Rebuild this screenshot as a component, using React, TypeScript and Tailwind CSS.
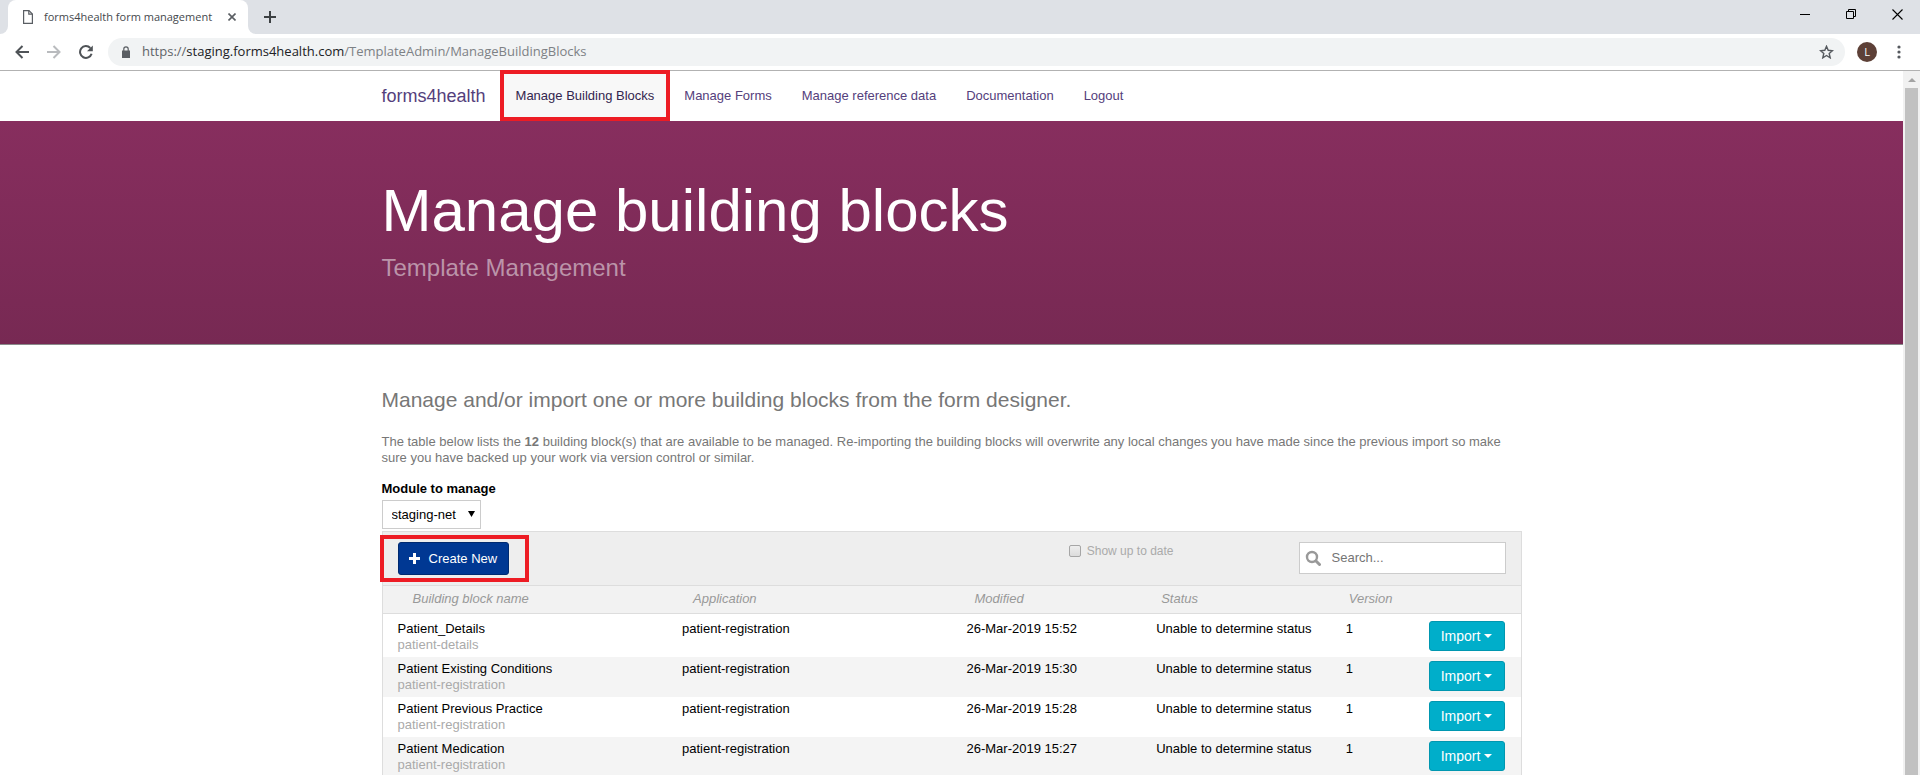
import React from "react";

const navItems = ["Manage Building Blocks", "Manage Forms", "Manage reference data", "Documentation", "Logout"];

const rows = [
  { name: "Patient_Details", slug: "patient-details", app: "patient-registration", modified: "26-Mar-2019 15:52" },
  { name: "Patient Existing Conditions", slug: "patient-registration", app: "patient-registration", modified: "26-Mar-2019 15:30" },
  { name: "Patient Previous Practice", slug: "patient-registration", app: "patient-registration", modified: "26-Mar-2019 15:28" },
  { name: "Patient Medication", slug: "patient-registration", app: "patient-registration", modified: "26-Mar-2019 15:27" },
];

function Highlight({ className }: { className: string }) {
  return <span aria-hidden="true" className={`pointer-events-none absolute z-10 border-4 border-[#ed1c24] ${className}`} />;
}

function TabStrip() {
  return (
    <div className="flex h-[34px] shrink-0 items-stretch justify-between bg-[#dee1e6]">
      <div className="flex items-stretch">
        <div className="w-2 bg-white">
          <div className="h-full rounded-br-lg bg-[#dee1e6]" />
        </div>
        <div className="flex w-60 items-center rounded-t-lg bg-white pl-[15px] pr-[11px]">
          <svg width="10" height="14" viewBox="0 0 10 14" fill="none" stroke="#5a5e63" strokeWidth="1.2">
            <path d="M.6.6h5.4L9.4 4v9.4H.6z" />
            <path d="M5.8.8v3.4h3.4" />
          </svg>
          <span className="ml-[11px] flex-1 whitespace-nowrap text-[11px] text-[#45494d]">forms4health form management</span>
          <button aria-label="Close tab" className="p-px">
            <svg width="8" height="8" viewBox="0 0 8 8" stroke="#5a5e63" strokeWidth="1.6">
              <path d="M.5.5l7 7M7.5.5l-7 7" />
            </svg>
          </button>
        </div>
        <div className="w-2 bg-white">
          <div className="h-full rounded-bl-lg bg-[#dee1e6]" />
        </div>
        <button aria-label="New tab" className="flex items-center px-2">
          <svg width="12" height="12" viewBox="0 0 12 12" stroke="#3c4043" strokeWidth="2">
            <path d="M6 0v12M0 6h12" />
          </svg>
        </button>
      </div>
      <div className="flex items-start gap-9 pr-[17px] pt-[9px]">
        <button aria-label="Minimise">
          <svg width="10" height="11" viewBox="0 0 10 11" stroke="#000" strokeWidth="1">
            <path d="M0 5.5h10" />
          </svg>
        </button>
        <button aria-label="Restore">
          <svg width="10" height="10" viewBox="0 0 10 10" fill="none" stroke="#000" strokeWidth="1">
            <path d="M.5 2.500h7v7h-7z" />
            <path d="M2.500 2.500v-2h7v7h-2" />
          </svg>
        </button>
        <button aria-label="Close">
          <svg width="11" height="11" viewBox="0 0 11 11" stroke="#000" strokeWidth="1.1">
            <path d="M.5.5l10 10M10.5.5l-10 10" />
          </svg>
        </button>
      </div>
    </div>
  );
}

function AddressBar() {
  return (
    <div className="flex h-[37px] shrink-0 items-center border-b border-[#b2b2b2] bg-white pl-[15px] pr-[19px]">
      <div className="flex items-center gap-[18px]">
        <button aria-label="Back">
          <svg width="14" height="14" viewBox="0 0 14 14" fill="none" stroke="#4f5357" strokeWidth="2">
            <path d="M14 7H2M7.5 1L1.5 7l6 6" />
          </svg>
        </button>
        <button aria-label="Forward">
          <svg width="14" height="14" viewBox="0 0 14 14" fill="none" stroke="#b9bbbe" strokeWidth="2">
            <path d="M0 7h12M6.500 1l6 6-6 6" />
          </svg>
        </button>
        <button aria-label="Reload">
          <svg width="14" height="14" viewBox="0 0 14 14">
            <path d="M12.600 8.700A5.900 5.900 0 1 1 11.300 3" fill="none" stroke="#4f5357" strokeWidth="2" />
            <path d="M13.800 .4v5.800H8z" fill="#4f5357" />
          </svg>
        </button>
      </div>
      <div className="ml-[15px] flex h-7 flex-1 items-center rounded-full bg-[#f1f3f4] pl-[14px] pr-[11px]">
        <svg width="8" height="12" viewBox="0 0 8 12">
          <path d="M0 4.500h8V12H0z" fill="#5a5e63" />
          <path d="M1.800 5V3a2.200 2.200 0 0 1 4.400 0v2" fill="none" stroke="#5a5e63" strokeWidth="1.200" />
        </svg>
        <span role="textbox" aria-label="Address" className="ml-3 flex-1 whitespace-nowrap text-[13px] text-[#7d8185]">
          <span className="text-[#5f6368]">https://</span>
          <span className="text-[#202124]">staging.forms4health.com</span>/TemplateAdmin/ManageBuildingBlocks
        </span>
        <button aria-label="Bookmark this page">
          <svg width="15" height="14" viewBox="0 0 15 14" fill="none" stroke="#55595e" strokeWidth="1.400">
            <path d="M7.500 1.300l1.700 4 4.300.4-3.300 2.800 1 4.300-3.700-2.300-3.700 2.300 1-4.300L1.500 5.700l4.300-.4z" />
          </svg>
        </button>
      </div>
      <button aria-label="Profile" className="ml-3 flex size-5 items-center justify-center rounded-full bg-[#5d4037] text-[11px] text-white">
        L
      </button>
      <button aria-label="Menu" className="ml-5">
        <svg width="4" height="14" viewBox="0 0 4 14" fill="#55595e">
          <circle cx="2" cy="2" r="1.600" />
          <circle cx="2" cy="7" r="1.600" />
          <circle cx="2" cy="12" r="1.600" />
        </svg>
      </button>
    </div>
  );
}

function SiteNav() {
  return (
    <nav className="mx-auto flex h-[50px] max-w-[1140px] items-stretch text-[#54407c]">
      <a href="#" className="flex items-center pr-[15px] text-lg">forms4health</a>
      <ul className="flex items-stretch text-[13px]">
        {navItems.map((item, i) => (
          <li key={item} className={i === 0 ? "relative flex bg-[#f8f8f8] text-[#33264f]" : "flex"}>
            <a href="#" className="flex items-center px-[15px]">{item}</a>
            {i === 0 && <Highlight className="-inset-x-px -top-px bottom-0" />}
          </li>
        ))}
      </ul>
    </nav>
  );
}

function Toolbar() {
  return (
    <div className="flex items-start border-b border-[#dddddd] bg-[#eeeeee] px-[15px] py-[10px]">
      <div className="relative">
        <button className="flex h-[33px] w-[111px] items-center gap-[9px] rounded-[3px] border border-[#002a70] bg-[#003893] pl-[10px] text-[13px] text-white">
          <svg width="11" height="11" viewBox="0 0 11 11" stroke="#fff" strokeWidth="3">
            <path d="M5.500 0v11M0 5.500h11" />
          </svg>
          Create New
        </button>
        <Highlight className="-bottom-[7px] -left-[18px] -right-5 -top-[7px]" />
      </div>
      <label className="ml-auto mr-[125px] flex items-center gap-[6px] text-xs leading-[18px] text-[#aaaaaa]">
        <input type="checkbox" className="size-3 appearance-none rounded-[2px] border border-[#a6a6a6] bg-linear-to-b from-[#eeeeee] to-[#dcdcdc]" />
        Show up to date
      </label>
      <div className="flex h-8 w-[207px] items-center border border-[#cccccc] bg-white pl-[5px]">
        <svg width="16" height="16" viewBox="0 0 16 16" fill="none" stroke="#999999">
          <circle cx="7" cy="7" r="5" strokeWidth="2.400" />
          <path d="M11 11l3.500 3.500" strokeWidth="3" strokeLinecap="round" />
        </svg>
        <input aria-label="Search" placeholder="Search..." className="ml-[11px] w-full min-w-0 flex-1 text-[13px] outline-none placeholder:text-[#757575]" />
      </div>
    </div>
  );
}

function BlocksTable() {
  return (
    <table className="w-full table-fixed border-collapse text-left text-[13px] leading-4">
      <colgroup>
        <col className="w-3/12" />
        <col className="w-3/12" />
        <col className="w-2/12" />
        <col className="w-2/12" />
        <col className="w-1/12" />
        <col className="w-1/12" />
      </colgroup>
      <thead>
        <tr className="h-[27px] border-b border-[#dddddd] bg-[#f2f2f2] italic text-[#999999]">
          <th scope="col" className="pl-[30px] font-normal">Building block name</th>
          <th scope="col" className="pl-[26px] font-normal">Application</th>
          <th scope="col" className="pl-[23px] font-normal">Modified</th>
          <th scope="col" className="pl-5 font-normal">Status</th>
          <th scope="col" className="pl-[18px] font-normal">Version</th>
          <td />
        </tr>
      </thead>
      <tbody className="text-black">
        <tr className="h-1"><td colSpan={6} /></tr>
        {rows.map((row) => (
          <tr key={row.name} className="h-10 align-top even:bg-white odd:bg-[#f4f4f4]">
            <td className="pl-[15px] pt-1">
              <div>{row.name}</div>
              <div className="text-[#aaaaaa]">{row.slug}</div>
            </td>
            <td className="pl-[15px] pt-1">{row.app}</td>
            <td className="pl-[15px] pt-1">{row.modified}</td>
            <td className="whitespace-nowrap pl-[15px] pt-1">Unable to determine status</td>
            <td className="pl-[15px] pt-1">1</td>
            <td className="pr-4 pt-1">
              <button className="ml-auto flex h-[30px] w-[76px] items-center justify-center gap-1 rounded-[3px] border border-[#0097b0] bg-[#00aeca] text-sm text-white">
                Import
                <svg width="8" height="4" viewBox="0 0 8 4" fill="#fff">
                  <path d="M0 0h8L4 4z" />
                </svg>
              </button>
            </td>
          </tr>
        ))}
      </tbody>
    </table>
  );
}

export default function App() {
  return (
    <div className="flex h-screen flex-col overflow-hidden bg-white font-['Liberation_Sans',Arial,sans-serif]">
      <div className="shrink-0 font-['Open_Sans','Noto_Sans',sans-serif]">
        <TabStrip />
        <AddressBar />
      </div>
      <div className="flex min-h-0 flex-1">
        <div className="min-w-0 flex-1">
          <SiteNav />
          <header className="border-b border-[#8a8a8a] bg-linear-to-b from-[#872e5e] to-[#772953] pb-[60px] pt-[57px]">
            <div className="mx-auto max-w-[1140px]">
              <h1 className="text-[60px] leading-[66px] text-white">Manage building blocks</h1>
              <p className="mt-2 text-2xl leading-8 text-[#bb94a9]">Template Management</p>
            </div>
          </header>
          <main className="mx-auto max-w-[1140px] pt-[39px] text-[#777777]">
            <p className="text-[21px] leading-8">Manage and/or import one or more building blocks from the form designer.</p>
            <p className="mt-[18px] text-[13px] leading-4">
              The table below lists the <b>12</b> building block(s) that are available to be managed. Re-importing the building blocks will overwrite any local changes you have made since the previous import so make sure you have backed up your work via version control or similar.
            </p>
            <label htmlFor="module" className="mt-[15px] block text-[13px] font-bold leading-4 text-black">Module to manage</label>
            <div className="relative mt-[3px] w-[99px]">
              <select id="module" className="block h-[29px] w-full appearance-none border border-[#cccccc] bg-white pl-[9px] text-[13px] text-black">
                <option>staging-net</option>
              </select>
              <svg className="pointer-events-none absolute right-[6px] top-[11px]" width="7" height="6" viewBox="0 0 7 6">
                <path d="M0 0h7L3.500 6z" fill="#000" />
              </svg>
            </div>
            <section className="mt-[2px] border-x border-t border-[#dddddd]">
              <Toolbar />
              <BlocksTable />
            </section>
          </main>
        </div>
        <div aria-hidden="true" className="flex w-[17px] flex-col items-center bg-[#f1f1f1]">
          <div className="flex h-[17px] items-center justify-center">
            <svg width="8" height="4" viewBox="0 0 8 4" fill="#a3a3a3">
              <path d="M0 4h8L4 0z" />
            </svg>
          </div>
          <div className="w-[13px] flex-1 bg-[#c1c1c1]" />
        </div>
      </div>
    </div>
  );
}
